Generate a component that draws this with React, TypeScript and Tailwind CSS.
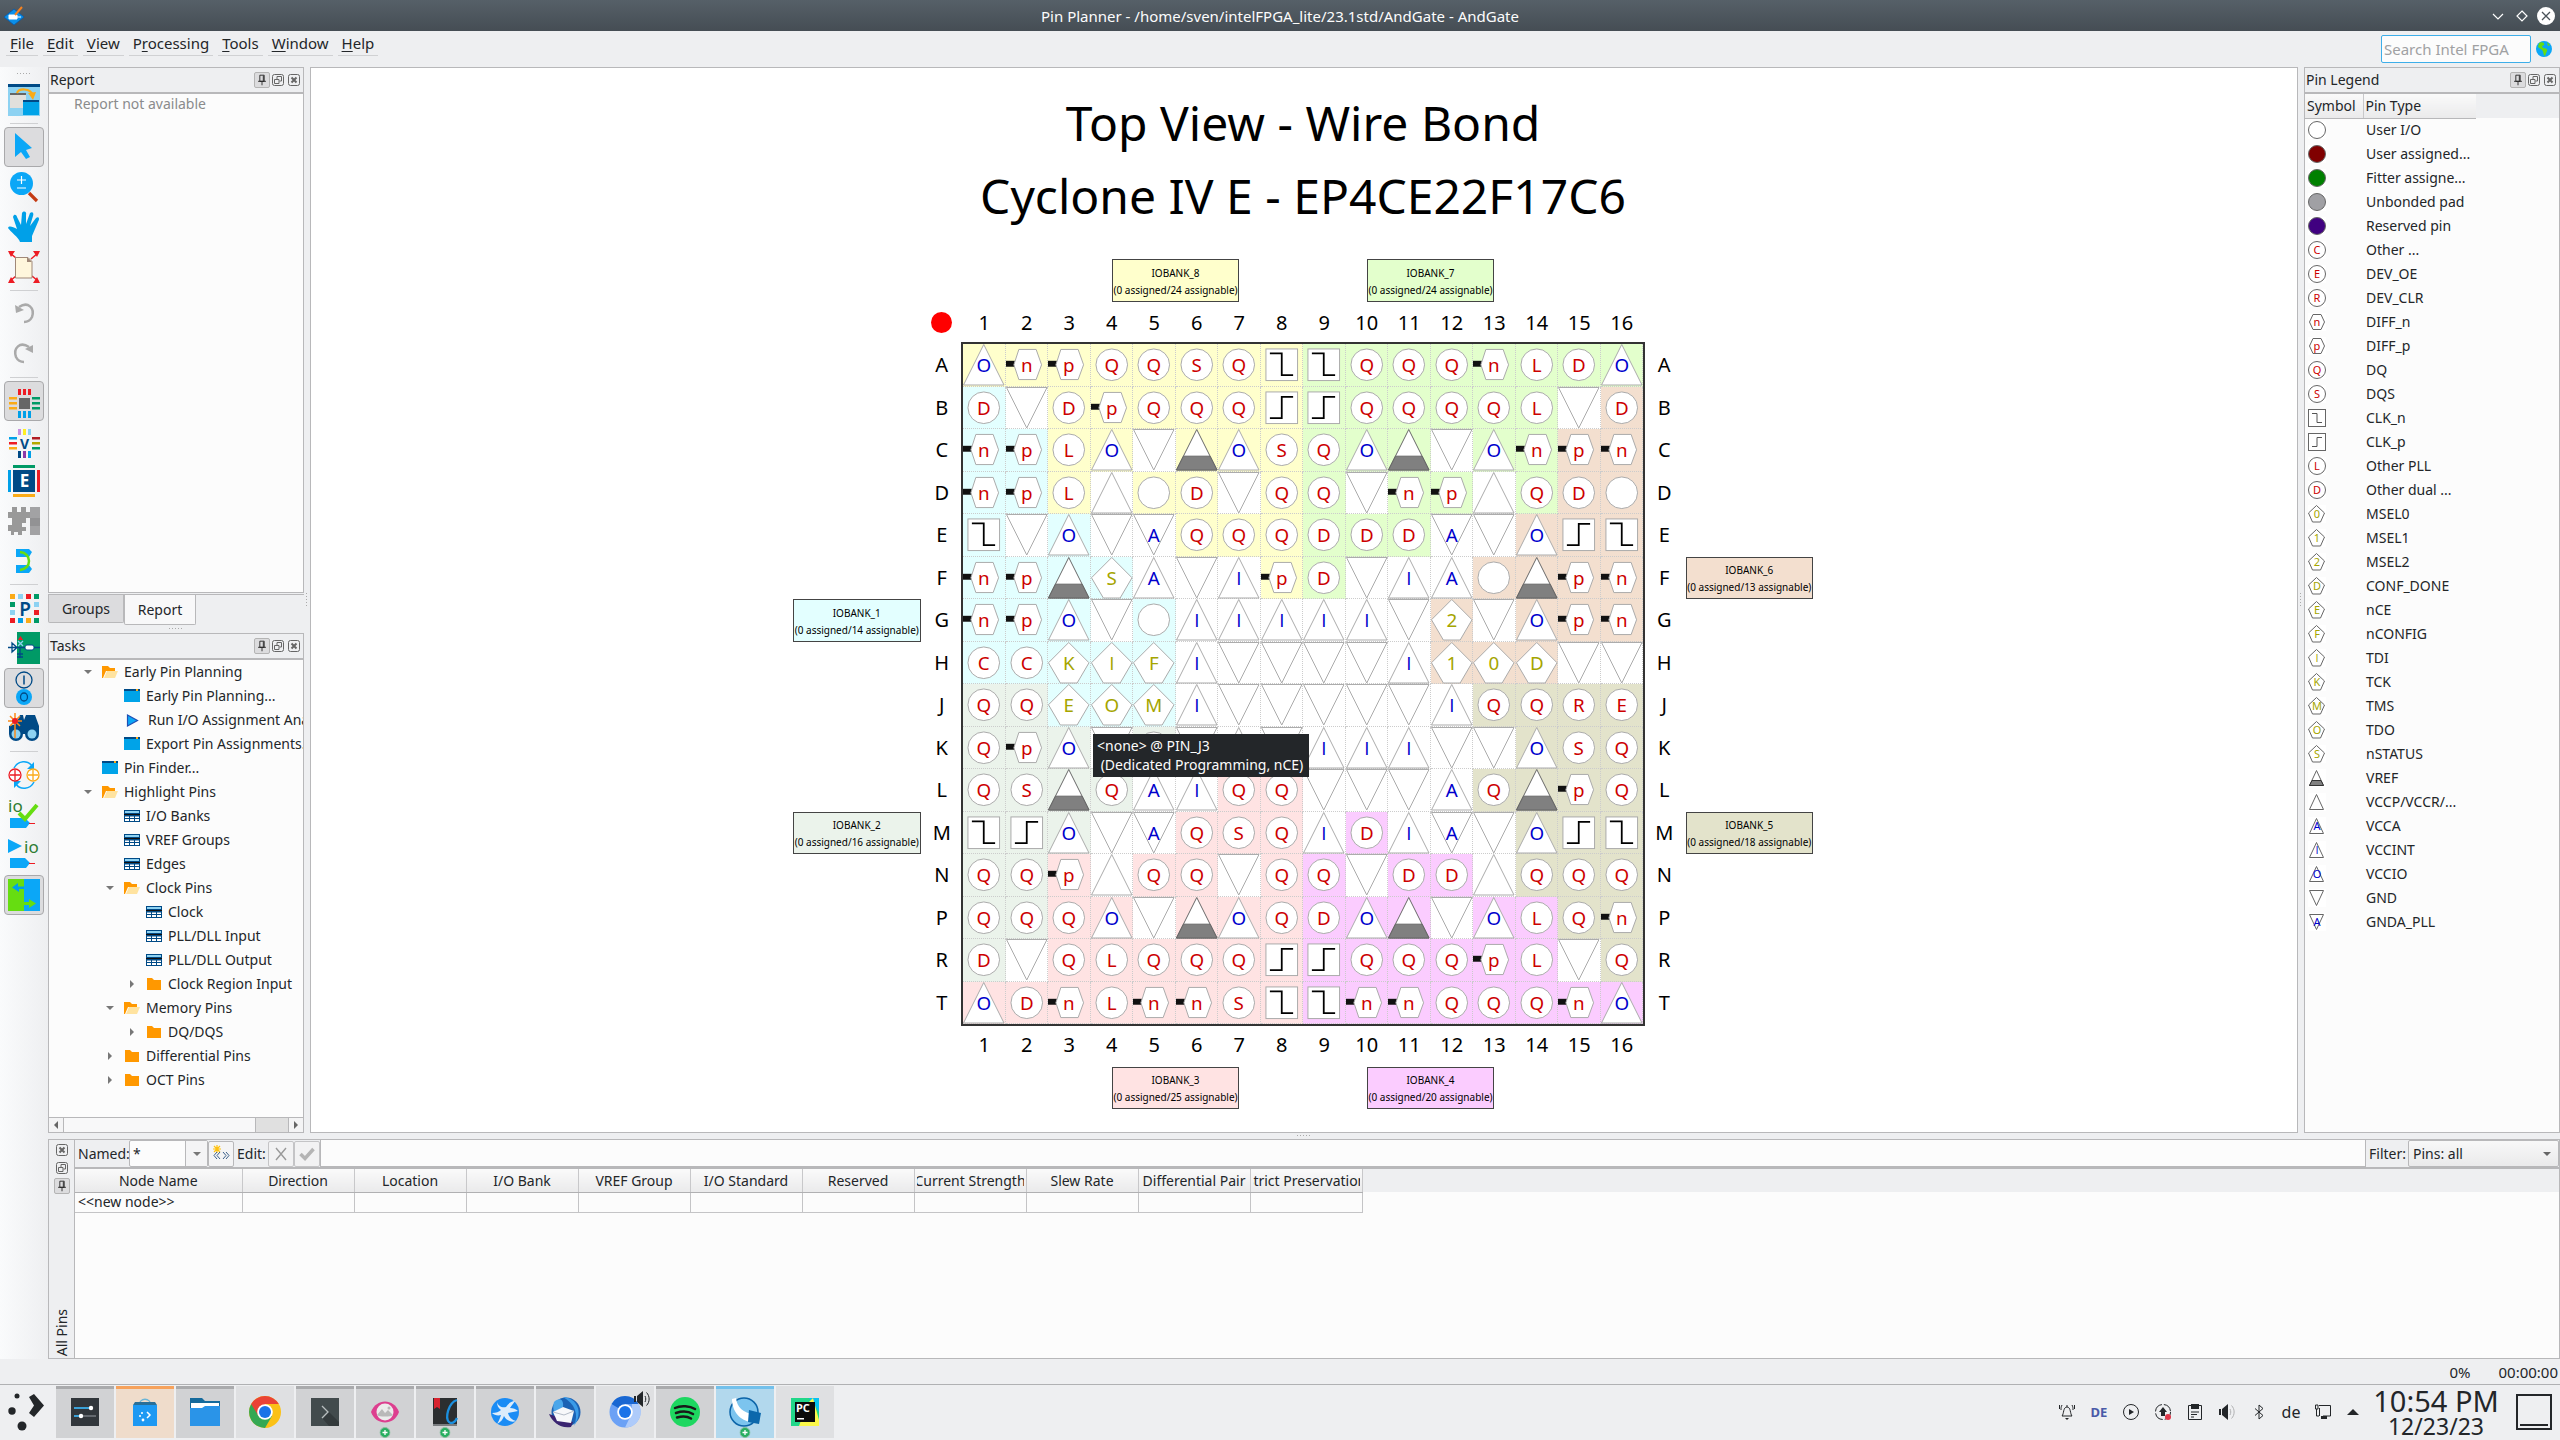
import type { ReactNode } from 'react';

/* ------------------------------------------------------------------ */
/* Pin data                                                            */
/* ------------------------------------------------------------------ */

/* c = circle, h = differential hexagon, t = up triangle, v = down triangle,
   g = pentagon, kn / kp = clock, ref = voltage reference */
const PIN_ROWS: [string, string, string][] = [
  ['A', 'tO hn hp cQ cQ cS cQ kn kn cQ cQ cQ hn cL cD tO', 'yyyyyyyygggggggg'],
  ['B', 'cD v cD hp cQ cQ cQ kp kp cQ cQ cQ cQ cL v cD', 'c-yyyyyygggggg-p'],
  ['C', 'hn hp cL tO v ref tO cS cQ tO ref v tO hn hp hn', 'ccyy-yyyggg-ggpp'],
  ['D', 'hn hp cL t c cD v cQ cQ v hn hp t cQ cD c', 'ccy-yy-yg-gg-gpp'],
  ['E', 'kn v tO v vA cQ cQ cQ cD cD cD vA v tO kp kn', 'c-c--yyyggg--ppp'],
  ['F', 'hn hp ref gS tA v tI hp cD v tI tA c ref hp hn', 'cccc---yg---pppp'],
  ['G', 'hn hp tO v c tI tI tI tI tI v g2 v tO hp hn', 'ccc-c------p-ppp'],
  ['H', 'cC cC gK gI gF tI v v v v tI g1 g0 gD v v', 'ccccc------ppp--'],
  ['J', 'cQ cQ gE gO gM tI v v v v v tI cQ cQ cR cE', 'ssccc-------oooo'],
  ['K', 'cQ hp tO v c v t v tI tI tI v v tO cS cQ', 'sss-s--------ooo'],
  ['L', 'cQ cS ref cQ tA tI cQ cQ v v v tA cQ ref hp cQ', 'ssss--rr----oooo'],
  ['M', 'kn kp tO v vA cQ cS cQ tI cD tI vA v tO kp kn', 'sss--rrr-m---ooo'],
  ['N', 'cQ cQ hp t cQ cQ v cQ cQ v cD cD t cQ cQ cQ', 'ssr-rr-rm-mm-ooo'],
  ['P', 'cQ cQ cQ tO v ref tO cQ cD tO ref v tO cL cQ hn', 'ssrr-rrrmmm-mmoo'],
  ['R', 'cD v cQ cL cQ cQ cQ kp kp cQ cQ cQ hp cL v cQ', 's-rrrrrrmmmmmm-o'],
  ['T', 'tO cD hn cL hn hn cS kn kn hn hn cQ cQ cQ hn tO', 'rrrrrrrrmmmmmmmm'],
];

const BANK_BG: Record<string, string> = {
  y: 'bg-[#ffffcc]',
  g: 'bg-[#e3ffcc]',
  c: 'bg-[#e3ffff]',
  s: 'bg-[#ebf3eb]',
  r: 'bg-[#ffe3e3]',
  m: 'bg-[#fbccff]',
  o: 'bg-[#e3e3cb]',
  p: 'bg-[#f3dfcf]',
  '-': 'bg-white',
};

/* column and row are counted in half cells and cells of the package grid */
const BANKS = [
  { id: 8, count: 24, key: 'y', col: 16, row: 1 },
  { id: 7, count: 24, key: 'g', col: 28, row: 1 },
  { id: 1, count: 14, key: 'c', col: 1, row: 9 },
  { id: 6, count: 13, key: 'p', col: 43, row: 8 },
  { id: 2, count: 16, key: 's', col: 1, row: 14 },
  { id: 5, count: 18, key: 'o', col: 43, row: 14 },
  { id: 3, count: 25, key: 'r', col: 16, row: 20 },
  { id: 4, count: 20, key: 'm', col: 28, row: 20 },
];

const COLS = Array.from({ length: 16 }, (_, i) => i + 1);

const LEGEND: [string, string][] = [
  ['c', 'User I/O'],
  ['c#800000', 'User assigned...'],
  ['c#008000', 'Fitter assigne...'],
  ['c#a0a0a4', 'Unbonded pad'],
  ['c#400080', 'Reserved pin'],
  ['cC', 'Other ...'],
  ['cE', 'DEV_OE'],
  ['cR', 'DEV_CLR'],
  ['hn', 'DIFF_n'],
  ['hp', 'DIFF_p'],
  ['cQ', 'DQ'],
  ['cS', 'DQS'],
  ['kn', 'CLK_n'],
  ['kp', 'CLK_p'],
  ['cL', 'Other PLL'],
  ['cD', 'Other dual ...'],
  ['g0', 'MSEL0'],
  ['g1', 'MSEL1'],
  ['g2', 'MSEL2'],
  ['gD', 'CONF_DONE'],
  ['gE', 'nCE'],
  ['gF', 'nCONFIG'],
  ['gI', 'TDI'],
  ['gK', 'TCK'],
  ['gM', 'TMS'],
  ['gO', 'TDO'],
  ['gS', 'nSTATUS'],
  ['ref', 'VREF'],
  ['t', 'VCCP/VCCR/...'],
  ['tA', 'VCCA'],
  ['tI', 'VCCINT'],
  ['tO', 'VCCIO'],
  ['v', 'GND'],
  ['vA', 'GNDA_PLL'],
];

/* ------------------------------------------------------------------ */
/* Pin symbols                                                         */
/* ------------------------------------------------------------------ */

const INK: Record<string, string> = { c: '#cc0000', h: '#cc0000', t: '#0000cc', v: '#0000cc', g: '#a5a500' };

function ChipPin({ code }: { code: string }) {
  const kind = code === 'ref' ? 'ref' : code[0];
  const letter = kind === 'ref' || kind === 'k' ? '' : code.slice(1);
  const line = { fill: '#fff', stroke: '#aaa', strokeWidth: 1 };
  return (
    <svg viewBox="0 0 42 42" className="block size-full overflow-visible">
      {kind === 'c' && <circle cx="21" cy="21" r="16" {...line} />}
      {kind === 'h' && (
        <>
          <path d="M0 17H9V23H0Z" fill="#111" />
          <path d="M13 5.5H30.500L36 21L30.500 36H13L8 21Z" {...line} />
        </>
      )}
      {kind === 't' && <path d="M21 .5L41.500 41.500H.5Z" {...line} />}
      {kind === 'v' && <path d="M.5 .5H41.500L21 41.500Z" {...line} />}
      {kind === 'g' && <path d="M21 .5L41.500 21L29.500 41.500H12.500L.5 21Z" {...line} />}
      {kind === 'ref' && (
        <>
          <path d="M21 .5L41.500 41.500H.5Z" fill="#fff" stroke="#666" />
          <path d="M7.500 27.500H34.500L41.500 41.500H.5Z" fill="#808080" stroke="#666" />
        </>
      )}
      {kind === 'k' && (
        <>
          <rect x="5" y="5" width="32" height="32" {...line} />
          <path
            d={code === 'kn' ? 'M9 9.500H21V31.500H32.500' : 'M9 31.500H21V10H32.500'}
            fill="none"
            stroke="#000"
            strokeWidth="1.8"
          />
        </>
      )}
      {letter && (
        <text
          x="21"
          y="28"
          textAnchor="middle"
          fontSize="19"
          fill={INK[kind]}
          className={letter === 'I' ? "font-['Open_Sans',sans-serif]" : ''}
        >
          {letter}
        </text>
      )}
    </svg>
  );
}

function LegendPin({ code }: { code: string }) {
  const kind = code === 'ref' ? 'ref' : code[0];
  const rest = kind === 'ref' || kind === 'k' ? '' : code.slice(1);
  const fill = rest.startsWith('#') ? rest : '#fff';
  const letter = rest.startsWith('#') ? '' : rest;
  const line = { fill, stroke: '#666', strokeWidth: 1 };
  return (
    <svg viewBox="0 0 18 18" className="block size-[18px] overflow-visible bg-white">
      {kind === 'c' && <circle cx="9" cy="9" r="8.500" {...line} />}
      {kind === 'h' && <path d="M5 1.500H13L16.500 9L13 16.500H5L1.500 9Z" {...line} />}
      {kind === 't' && <path d="M8.500 1.500L15.500 16.500H1.500Z" {...line} />}
      {kind === 'v' && <path d="M1.500 1.500H15.500L8.500 16.500Z" {...line} />}
      {kind === 'g' && <path d="M8.500 .5L16.500 8L12.500 17H4.500L.5 8Z" {...line} />}
      {kind === 'ref' && (
        <>
          <path d="M8.500 1.500L15.500 16.500H1.500Z" {...line} />
          <path d="M4 11.500H13L15.500 16.500H1.500Z" fill="#808080" stroke="#333" />
        </>
      )}
      {kind === 'k' && (
        <>
          <rect x=".5" y=".5" width="17" height="17" {...line} />
          <path d={code === 'kn' ? 'M4 4.500H9V13.500H14' : 'M4 13.500H9V4.500H14'} fill="none" stroke="#555" />
        </>
      )}
      {letter && (
        <text
          x="9"
          y="13"
          textAnchor="middle"
          fontSize="11"
          fill={INK[kind]}
          className={letter === 'I' ? "font-['Open_Sans',sans-serif]" : ''}
        >
          {letter}
        </text>
      )}
    </svg>
  );
}

/* ------------------------------------------------------------------ */
/* Dock frame pieces                                                   */
/* ------------------------------------------------------------------ */

function PinGlyph() {
  return (
    <svg viewBox="0 0 16 16" className="size-4" fill="none" stroke="#222">
      <path d="M5.500 2.500H10.500V9.500H5.500ZM3.500 9.500H12.500M8 10V14M9.500 3V9" />
    </svg>
  );
}

function RestoreGlyph() {
  return (
    <svg viewBox="0 0 12 12" className="size-3" fill="none" stroke="#666">
      <rect x=".5" y=".5" width="11" height="11" rx="2" />
      <path d="M5 5V2.500H9.500V7H7.500M2.500 5.500H7V9.500H2.500Z" />
    </svg>
  );
}

function CloseGlyph() {
  return (
    <svg viewBox="0 0 12 12" className="size-3" fill="none" stroke="#666">
      <rect x=".5" y=".5" width="11" height="11" rx="2" />
      <path d="M3.500 3.500L8.500 8.500M8.500 3.500L3.500 8.500" strokeWidth="2" />
    </svg>
  );
}

function DockButtons({ vertical = false }: { vertical?: boolean }) {
  const pin = (
    <button
      key="pin"
      aria-label="Pin"
      className="flex size-4 items-center justify-center rounded-xs border border-[#b4b4b4] bg-[#dcdcde]"
    >
      <PinGlyph />
    </button>
  );
  const restore = (
    <button key="restore" aria-label="Detach" className="flex size-4 items-center justify-center">
      <RestoreGlyph />
    </button>
  );
  const close = (
    <button key="close" aria-label="Close" className="flex size-4 items-center justify-center">
      <CloseGlyph />
    </button>
  );
  return vertical ? (
    <div className="flex flex-col items-center gap-0.5 pt-0.5">{[close, restore, pin]}</div>
  ) : (
    <div className="flex items-center">{[pin, restore, close]}</div>
  );
}

function DockHeader({ title }: { title: string }) {
  return (
    <div className="flex h-[26px] shrink-0 items-center justify-between border-b-2 border-[#b8b8ba] px-px pb-px">
      <h2>{title}</h2>
      <DockButtons />
    </div>
  );
}

function GripH() {
  return <div className="h-1 w-4 bg-[radial-gradient(#aaa_35%,transparent_40%)] bg-size-[3px_3px]" />;
}

function GripV() {
  return <div className="h-4 w-1 bg-[radial-gradient(#aaa_35%,transparent_40%)] bg-size-[3px_3px]" />;
}

/* ------------------------------------------------------------------ */
/* Tool bar                                                            */
/* ------------------------------------------------------------------ */

type Tool = { label: string; on?: boolean; icon: ReactNode };

const bars = (c: string[]) => (
  <>
    <path d="M10 4h3v6h-3z" fill={c[0]} />
    <path d="M15 4h3v6h-3z" fill={c[1]} />
    <path d="M20 4h3v6h-3z" fill={c[2]} />
    <path d="M24 12h8v2.500h-8z" fill={c[3]} />
    <path d="M24 17h8v2.500h-8z" fill={c[4]} />
    <path d="M24 22h8v2.500h-8z" fill={c[5]} />
    <path d="M10 26h3v7h-3z" fill={c[6]} />
    <path d="M15 26h3v7h-3z" fill={c[7]} />
    <path d="M20 26h3v7h-3z" fill={c[8]} />
    <path d="M1 12h8v2.500h-8z" fill={c[9]} />
    <path d="M1 17h8v2.500h-8z" fill={c[10]} />
    <path d="M1 22h8v2.500h-8z" fill={c[11]} />
  </>
);

const TOOL_GROUPS: Tool[][] = [
  [
    {
      label: 'Detach window',
      icon: (
        <>
          <rect width="32" height="32" fill="#8dd2f2" />
          <rect width="32" height="3" fill="#004a86" />
          <rect x="2" y="9" width="16" height="15" fill="#e2e0dc" />
          <rect x="2" y="9" width="16" height="2" fill="#666" />
          <rect x="15" y="16" width="16" height="15" fill="#00a3e8" />
          <rect x="15" y="16" width="16" height="2" fill="#004a86" />
          <path d="M9 9C11 4 22 4 25 11" fill="none" stroke="#fbab18" strokeWidth="2.200" />
          <path d="M20 9L28 8L25 16Z" fill="#fbab18" />
        </>
      ),
    },
  ],
  [
    {
      label: 'Selection tool',
      on: true,
      icon: <path d="M7 2V26L13 21L18 28L22 26L18 19L24 17Z" fill="#0ba7f7" />,
    },
    {
      label: 'Zoom tool',
      icon: (
        <>
          <circle cx="13.500" cy="12.500" r="11.500" fill="#0ba7f7" />
          <path d="M13.500 5V13M9 9H18M9 17H18" stroke="#fff" strokeWidth="1.200" />
          <path d="M21 22L29 30" stroke="#c43a12" strokeWidth="3.200" />
        </>
      ),
    },
    {
      label: 'Hand tool',
      icon: (
        <path
          d="M12 31C11 27 2 20 0 17C1 14 5 16 9 18L5 6C6 2 9 4 9 6L13 14L14 2C16-1 19 1 18 4L18 13L22 2C25 0 26 3 25 5L22 15L28 7C31 5 32 8 30 11L24 25L24 31Z"
          fill="#00a0e8"
        />
      ),
    },
    {
      label: 'Fit in window',
      icon: (
        <>
          <path d="M2 2L8 7M30 2L23 8M2 30L8 25M30 30L24 25" stroke="#ed1c24" strokeWidth="1.500" />
          <path d="M0 0H7L3 6ZM32 0H25L29 6ZM0 32H7L3 26ZM32 32H25L29 26Z" fill="#ed1c24" />
          <path d="M7.500 6.500H20L24 10.500V27H7.500Z" fill="#fff6dc" stroke="#a08878" />
          <path d="M19 6L24 11H19Z" fill="#a08878" />
        </>
      ),
    },
  ],
  [
    {
      label: 'Undo',
      icon: (
        <>
          <path d="M11 9C20 3 27 10 24 19C22 23 19 24 16 24" fill="none" stroke="#aaa" strokeWidth="2.500" />
          <path d="M7 7L16 12L8 15Z" fill="#aaa" />
        </>
      ),
    },
    {
      label: 'Redo',
      icon: (
        <>
          <path d="M21 9C12 3 5 10 8 19C10 23 13 24 16 24" fill="none" stroke="#aaa" strokeWidth="2.500" />
          <path d="M25 7L17 11L25 15Z" fill="#aaa" />
        </>
      ),
    },
  ],
  [
    {
      label: 'Show I/O banks',
      on: true,
      icon: (
        <>
          {bars([
            '#ed1c24', '#ed1c24', '#ed1c24', '#009a66', '#009a66', '#009a66',
            '#00a0e8', '#00a0e8', '#00a0e8', '#fbab18', '#fbab18', '#fbab18',
          ])}
          <rect x="11" y="13" width="11" height="11" fill="#666" />
        </>
      ),
    },
    {
      label: 'Show VREF groups',
      icon: (
        <>
          {bars([
            '#c791e0', '#ffee22', '#8dd2f2', '#b01c24', '#b5a800', '#009a66',
            '#004a86', '#8b3aa8', '#00a0e8', '#00a0e8', '#ed1c24', '#fbab18',
          ])}
          <text x="16.500" y="24" textAnchor="middle" fontSize="14" fontWeight="700" fill="#004a86">V</text>
        </>
      ),
    },
    {
      label: 'Show edges',
      icon: (
        <>
          <path d="M5 0h22v3h-22z" fill="#009a66" />
          <path d="M0 5h3v22h-3z" fill="#00a0e8" />
          <path d="M29 5h3v22h-3z" fill="#ed1c24" />
          <path d="M5 29h22v3h-22z" fill="#fbab18" />
          <path d="M5 5h22v22h-22z" fill="#004a86" />
          <text x="16.500" y="22" textAnchor="middle" fontSize="17" fontWeight="700" fill="#fff">E</text>
        </>
      ),
    },
    {
      label: 'Show fitter placements',
      icon: (
        <>
          <path
            d="M0 7H4V2H9V7H13V2H18V7H22V13H18V18H14V22H18V26H14V30H10V27H6V30H3V26H0V20H4V13H0Z"
            fill="#999"
          />
          <rect x="22" y="2" width="10" height="28" fill="#a2a2a4" />
          <rect x="22" y="13" width="10" height="8" fill="#929294" />
        </>
      ),
    },
    {
      label: 'Differential pair connections',
      icon: (
        <>
          <path d="M8 4H21L24 7L21 12H8ZM8 20H21L24 24L21 28H8Z" fill="#0ba7f7" />
          <path d="M12 7C24 8 24 24 12 25" fill="none" stroke="#66dd11" strokeWidth="2.500" />
        </>
      ),
    },
  ],
  [
    {
      label: 'Pin legend',
      icon: (
        <>
          <path d="M2 2h5v5h-5zM18 26h5v5h-5z" fill="#fbab18" />
          <path d="M10 2h5v5h-5zM26 10h5v5h-5zM2 18h5v5h-5z" fill="#8dd2f2" />
          <path d="M18 2h5v5h-5zM26 18h5v5h-5zM2 26h5v5h-5z" fill="#ed1c24" />
          <path d="M26 2h5v5h-5zM2 10h5v5h-5zM26 26h5v5h-5z" fill="#009a66" />
          <path d="M10 26h5v5h-5z" fill="#00a0e8" />
          <text x="17" y="24" textAnchor="middle" fontSize="19" fontWeight="600" fill="#004a86">P</text>
        </>
      ),
    },
    {
      label: 'Board trace model',
      icon: (
        <>
          <rect x="9" width="23" height="32" fill="#009a66" />
          <path d="M0 15.500H17M26 15.500H32M4 11V20L9 15.500ZM12 16V26M9 22H15M9 25H15" fill="none" stroke="#004a86" strokeWidth="1.300" />
          <path d="M10 8L12.500 4L15 8Z" fill="#ed1c24" />
          <path d="M10 9L15 14M15 9L10 14" stroke="#8dd2f2" strokeWidth="1.300" />
          <rect x="17" y="13" width="9" height="5" rx="2" fill="#fff" stroke="#004a86" />
        </>
      ),
    },
    {
      label: 'I/O toggle',
      on: true,
      icon: (
        <>
          <circle cx="16" cy="8" r="8" fill="none" stroke="#004a86" strokeWidth="1.300" />
          <path d="M16 3.500V12.500" stroke="#004a86" strokeWidth="1.500" />
          <circle cx="16" cy="25" r="8" fill="#0ba7f7" />
          <ellipse cx="16" cy="25" rx="3.500" ry="4" fill="none" stroke="#004a86" strokeWidth="1.300" />
        </>
      ),
    },
    {
      label: 'Pin finder',
      icon: (
        <>
          <path d="M8 12L12 3H15L16 8L18 3H27L31 14V22H1V14Z" fill="#004a86" />
          <circle cx="8" cy="22" r="7" fill="#004a86" />
          <circle cx="24" cy="22" r="7" fill="#004a86" />
          <circle cx="8" cy="22" r="4.500" fill="#8dd2f2" />
          <circle cx="24" cy="22" r="4.500" fill="#8dd2f2" />
          <path d="M7 1V26M0 9H14M2 4L12 14M12 4L2 14" stroke="#fb8b18" strokeWidth="1.500" />
          <circle cx="7" cy="9" r="3" fill="#ed1c24" />
        </>
      ),
    },
  ],
  [
    {
      label: 'Swap pins',
      icon: (
        <>
          <path d="M6 9C10 1 20 1 24 7M26 23C22 31 12 31 8 25" fill="none" stroke="#0ba7f7" strokeWidth="1.500" />
          <path d="M26 3V10H19ZM6 29V22H13Z" fill="#0ba7f7" />
          <circle cx="7" cy="16" r="6" fill="#fff" stroke="#ed1c24" strokeWidth="1.300" />
          <path d="M7 11V21M2 16H12" stroke="#ed1c24" strokeWidth="1.300" />
          <circle cx="25" cy="16" r="6" fill="#fff" stroke="#fbab18" strokeWidth="1.300" />
          <path d="M25 11V21M20 16H30" stroke="#fbab18" strokeWidth="1.300" />
        </>
      ),
    },
    {
      label: 'Enable live I/O check',
      icon: (
        <>
          <text x="0" y="13" fontSize="17" fill="#2e7d32">io</text>
          <path d="M2 19H17L22 24L18 29H2Z" fill="#0ba7f7" />
          <path d="M21 24.500H27" stroke="#ed1c24" />
          <path d="M11 14L17 20L29 6" fill="none" stroke="#66dd11" strokeWidth="4" />
        </>
      ),
    },
    {
      label: 'Start I/O assignment analysis',
      icon: (
        <>
          <path d="M0 0V14L14 7Z" fill="#0ba7f7" />
          <text x="16" y="14" fontSize="17" fill="#2e7d32">io</text>
          <path d="M2 19H17L22 24L18 29H2Z" fill="#0ba7f7" />
          <path d="M21 24.500H27" stroke="#ed1c24" />
        </>
      ),
    },
    {
      label: 'Sync node assignments',
      on: true,
      icon: (
        <>
          <rect width="16" height="32" fill="#66dd11" />
          <rect x="16" width="16" height="32" fill="#0ba7f7" />
          <path d="M16 7.500H10V4L4 8.500L11 13V10H16Z" fill="#00a0e8" />
          <path d="M16 23H21V20L28 24.500L21 29V26H16Z" fill="#66dd11" />
        </>
      ),
    },
  ],
];

function ToolBar() {
  return (
    <nav
      aria-label="Tools"
      className="flex w-12 shrink-0 flex-col items-center bg-gradient-to-r from-[#fafbfc] to-[#eeeff1]"
    >
      <div className="flex h-[13px] items-center">
        <GripH />
      </div>
      {TOOL_GROUPS.map((group, i) => (
        <div key={i} className="flex flex-col items-center">
          {i > 0 && (
            <div className="flex h-[7px] w-7 items-center">
              <div className="h-px w-full bg-[#cfd0d2]" />
            </div>
          )}
          {group.map((t) => (
            <button
              key={t.label}
              aria-label={t.label}
              className={
                t.on
                  ? 'flex size-10 items-center justify-center rounded-sm border border-[#a9a9ab] bg-[#dcdcde]'
                  : 'flex size-10 items-center justify-center'
              }
            >
              <svg viewBox="0 0 32 32" className="size-8 overflow-visible">
                {t.icon}
              </svg>
            </button>
          ))}
        </div>
      ))}
    </nav>
  );
}

/* ------------------------------------------------------------------ */
/* Report and tasks                                                    */
/* ------------------------------------------------------------------ */

type TaskIcon = 'open' | 'folder' | 'window' | 'play' | 'table';

const TASKS: { depth: number; arrow?: 'down' | 'right'; icon: TaskIcon; text: string }[] = [
  { depth: 0, arrow: 'down', icon: 'open', text: 'Early Pin Planning' },
  { depth: 1, icon: 'window', text: 'Early Pin Planning...' },
  { depth: 1, icon: 'play', text: 'Run I/O Assignment Analysis' },
  { depth: 1, icon: 'window', text: 'Export Pin Assignments...' },
  { depth: 0, icon: 'window', text: 'Pin Finder...' },
  { depth: 0, arrow: 'down', icon: 'open', text: 'Highlight Pins' },
  { depth: 1, icon: 'table', text: 'I/O Banks' },
  { depth: 1, icon: 'table', text: 'VREF Groups' },
  { depth: 1, icon: 'table', text: 'Edges' },
  { depth: 1, arrow: 'down', icon: 'open', text: 'Clock Pins' },
  { depth: 2, icon: 'table', text: 'Clock' },
  { depth: 2, icon: 'table', text: 'PLL/DLL Input' },
  { depth: 2, icon: 'table', text: 'PLL/DLL Output' },
  { depth: 2, arrow: 'right', icon: 'folder', text: 'Clock Region Input' },
  { depth: 1, arrow: 'down', icon: 'open', text: 'Memory Pins' },
  { depth: 2, arrow: 'right', icon: 'folder', text: 'DQ/DQS' },
  { depth: 1, arrow: 'right', icon: 'folder', text: 'Differential Pins' },
  { depth: 1, arrow: 'right', icon: 'folder', text: 'OCT Pins' },
];

const INDENT = ['pl-[29px]', 'pl-[51px]', 'pl-[73px]'];

function TaskGlyph({ icon }: { icon: TaskIcon }) {
  return (
    <svg viewBox="0 0 16 16" className="size-4 shrink-0">
      {icon === 'open' && (
        <>
          <path d="M0 2H6L8 4H13V7H4L1 14H0Z" fill="#ff9800" />
          <path d="M5 7H16L13 14H2Z" fill="#ffe3a0" />
        </>
      )}
      {icon === 'folder' && <path d="M1 2H6L8 4H15V14H1Z" fill="#ff9800" />}
      {icon === 'window' && (
        <>
          <rect y="1" width="16" height="13" fill="#00a3e8" />
          <rect y="1" width="16" height="2" fill="#004a86" />
          <rect x="12" y="1" width="2" height="2" fill="#fbab18" />
        </>
      )}
      {icon === 'play' && <path d="M3.500 3V14L13.500 8.500Z" fill="#0ba7f7" stroke="#1f4fb4" strokeWidth="1.200" />}
      {icon === 'table' && (
        <>
          <rect y="2" width="16" height="12" fill="#004a86" />
          <rect x="1" y="3" width="14" height="2" fill="#8dd2f2" />
          <path d="M1 8.500H5V10H1ZM6 8.500H10V10H6ZM11 8.500H15V10H11ZM1 11H5V13H1ZM6 11H10V13H6ZM11 11H15V13H11Z" fill="#fff" />
          <rect y="6" width="16" height="1" fill="#111" />
        </>
      )}
    </svg>
  );
}

function LeftDocks() {
  return (
    <div className="flex w-[256px] shrink-0 flex-col">
      <section className="flex min-h-0 flex-1 flex-col border border-[#b8b8ba]">
        <DockHeader title="Report" />
        <div className="min-h-0 flex-1 bg-[#fcfcfc] pl-[25px] leading-5 text-[#8a8b8c]">Report not available</div>
      </section>
      <div className="mt-px flex shrink-0 items-start border-t border-[#b8b8ba]" role="tablist">
        <button
          role="tab"
          aria-selected="false"
          className="h-7 w-[76px] rounded-b-xs border border-t-0 border-[#b8b8ba] bg-[#dcdcde]"
        >
          Groups
        </button>
        <button
          role="tab"
          aria-selected="true"
          className="h-[30px] w-[72px] rounded-b-xs border border-t-0 border-[#b8b8ba] bg-[#f8f8f9]"
        >
          Report
        </button>
      </div>
      <div className="flex h-2 shrink-0 items-center justify-center">
        <GripH />
      </div>
      <section className="flex h-[500px] shrink-0 flex-col border border-[#b8b8ba]">
        <DockHeader title="Tasks" />
        <ul className="min-h-0 flex-1 overflow-hidden bg-[#fcfcfc]">
          {TASKS.map((t) => (
            <li key={t.text} className={'flex h-6 items-center whitespace-nowrap ' + INDENT[t.depth]}>
              <span className="mr-1 flex w-5 shrink-0 justify-center">
                {t.arrow && (
                  <svg viewBox="0 0 8 8" className="size-2" fill="#777">
                    <path d={t.arrow === 'down' ? 'M0 2H8L4 6Z' : 'M2 0L6 4L2 8Z'} />
                  </svg>
                )}
              </span>
              <TaskGlyph icon={t.icon} />
              <span className={t.icon === 'play' ? 'ml-2' : 'ml-1.5'}>{t.text}</span>
            </li>
          ))}
        </ul>
        <div className="flex h-[15px] shrink-0 border-t border-[#b8b8ba] bg-[#e0e0e0]">
          <button aria-label="Scroll left" className="flex w-[15px] items-center justify-center border-r border-[#b8b8ba] bg-[#f4f4f5]">
            <svg viewBox="0 0 8 8" className="size-2" fill="#666">
              <path d="M6 0L2 4L6 8Z" />
            </svg>
          </button>
          <div className="w-[192px] border-r border-[#b8b8ba] bg-[#f8f8f9]" />
          <div className="flex-1" />
          <button aria-label="Scroll right" className="flex w-[15px] items-center justify-center border-l border-[#b8b8ba] bg-[#f4f4f5]">
            <svg viewBox="0 0 8 8" className="size-2" fill="#666">
              <path d="M2 0L6 4L2 8Z" />
            </svg>
          </button>
        </div>
      </section>
    </div>
  );
}

/* ------------------------------------------------------------------ */
/* Package view                                                        */
/* ------------------------------------------------------------------ */

function Label({ col, row, children }: { col: number; row: number; children: ReactNode }) {
  return (
    <div
      className="flex items-center justify-center text-[20px] leading-6"
      style={{ gridColumn: `${col} / span 2`, gridRow: row }}
    >
      {children}
    </div>
  );
}

function PackageView() {
  return (
    <main className="flex min-w-0 flex-1 flex-col items-center overflow-hidden border border-[#b8b8ba] bg-white pr-0.5 pt-[18px] text-black">
      <h1 className="text-center text-[48px] leading-[73px]">
        Top View - Wire Bond
        <br />
        Cyclone IV E - EP4CE22F17C6
      </h1>
      <div className="relative mt-[27px] grid h-[850px] w-[1020px] shrink-0 grid-cols-[repeat(48,minmax(0,1fr))] grid-rows-[repeat(20,minmax(0,1fr))]">
        {BANKS.map((b) => (
          <div
            key={b.id}
            className={
              'flex flex-col items-center justify-center whitespace-nowrap border border-[#444] pt-[3px] text-[10px] leading-[17px] ' +
              BANK_BG[b.key]
            }
            style={{ gridColumn: `${b.col} / span 6`, gridRow: b.row }}
          >
            <span>IOBANK_{b.id}</span>
            <span>(0 assigned/{b.count} assignable)</span>
          </div>
        ))}
        <div className="flex items-center justify-center" style={{ gridColumn: '7 / span 2', gridRow: 2 }}>
          <div className="size-[21px] rounded-full bg-[#ff0000]" />
        </div>
        {COLS.map((c) => (
          <Label key={'t' + c} col={7 + c * 2} row={2}>
            {c}
          </Label>
        ))}
        {COLS.map((c) => (
          <Label key={'b' + c} col={7 + c * 2} row={19}>
            {c}
          </Label>
        ))}
        {PIN_ROWS.map(([name], i) => (
          <Label key={'l' + name} col={7} row={i + 3}>
            {name}
          </Label>
        ))}
        {PIN_ROWS.map(([name], i) => (
          <Label key={'r' + name} col={41} row={i + 3}>
            {name}
          </Label>
        ))}
        <div
          className="grid grid-cols-[repeat(16,minmax(0,1fr))] grid-rows-[repeat(16,minmax(0,1fr))] outline-2 outline-[#333]"
          style={{ gridColumn: '9 / span 32', gridRow: '3 / span 16' }}
        >
          {PIN_ROWS.map(([name, pins, banks]) =>
            pins.split(' ').map((code, i) => (
              <div
                key={name + i}
                className={'min-h-0 min-w-0 border-b border-r border-dotted border-[#ccc] ' + BANK_BG[banks[i]]}
              >
                <ChipPin code={code} />
              </div>
            )),
          )}
        </div>
        <div
          role="tooltip"
          className="absolute left-[300px] top-[475px] h-[43px] w-[216px] whitespace-nowrap bg-[#232629] pl-1 pt-0.5 leading-[19px] text-[#fcfcfc]"
        >
          &lt;none&gt; @ PIN_J3
          <br />
          &nbsp;(Dedicated Programming, nCE)
        </div>
      </div>
    </main>
  );
}

function PinLegend() {
  return (
    <aside className="flex w-[256px] shrink-0 flex-col border border-[#b8b8ba]">
      <DockHeader title="Pin Legend" />
      <div className="min-h-0 flex-1 overflow-hidden bg-[#fcfcfc]">
        <table className="w-full table-fixed border-collapse">
          <thead>
            <tr className="h-6 bg-[#eeeff1] text-left">
              <th className="w-[58px] border-b border-r border-b-[#b8b8ba] border-r-[#c8c8ca] bg-gradient-to-b from-[#fafafa] to-[#eaeaeb] pl-0.5 font-normal">
                Symbol
              </th>
              <th className="w-[113px] border-b border-[#b8b8ba] bg-gradient-to-b from-[#fafafa] to-[#eaeaeb] pl-0.5 font-normal">
                Pin Type
              </th>
              <th />
            </tr>
          </thead>
          <tbody>
            {LEGEND.map(([code, text]) => (
              <tr key={text} className="h-6">
                <td className="pl-[3px]">
                  <LegendPin code={code} />
                </td>
                <td className="whitespace-nowrap pl-[3px]">{text}</td>
                <td />
              </tr>
            ))}
          </tbody>
        </table>
      </div>
    </aside>
  );
}

/* ------------------------------------------------------------------ */
/* All pins                                                            */
/* ------------------------------------------------------------------ */

const COLUMNS = [
  'Direction',
  'Location',
  'I/O Bank',
  'VREF Group',
  'I/O Standard',
  'Reserved',
  'Current Strength',
  'Slew Rate',
  'Differential Pair',
  'Strict Preservation',
];

function AllPins() {
  return (
    <section className="flex h-[220px] shrink-0 border border-[#b8b8ba]">
      <div className="flex w-[26px] shrink-0 flex-col items-center justify-between border-r border-[#b8b8ba] pb-0.5">
        <DockButtons vertical />
        <h2 className="rotate-180 [writing-mode:vertical-rl]">All Pins</h2>
      </div>
      <div className="flex min-w-0 flex-1 flex-col">
        <div className="flex h-[27px] shrink-0 items-center">
          <label htmlFor="named" className="w-[54px] pl-[3px]">
            Named:
          </label>
          <div className="flex h-[27px] w-[79px] shrink-0 rounded-xs border border-[#b8b8ba] bg-[#fcfcfc]">
            <input id="named" defaultValue="*" className="min-w-0 flex-1 bg-transparent pl-[3px] outline-none" />
            <button aria-label="Named history" className="flex w-[22px] items-center justify-center border-l border-[#b8b8ba] bg-[#f4f4f5]">
              <svg viewBox="0 0 8 8" className="size-2" fill="#777">
                <path d="M0 2H8L4 6Z" />
              </svg>
            </button>
          </div>
          <button aria-label="Node finder" className="flex h-[26px] w-[26px] shrink-0 items-center justify-center rounded-xs border border-[#b8b8ba] bg-[#f4f4f5]">
            <svg viewBox="0 0 18 18" className="size-[18px]" fill="none">
              <path d="M5 0V8M1 4H9M2 1L8 7M8 1L2 7" stroke="#ffc20e" strokeWidth="1.200" />
              <path d="M5 7L2 10.500L5 14M8 7L5 10.500L8 14M11 7L14 10.500L11 14M14 7L17 10.500L14 14" stroke="#3a5f8a" />
            </svg>
          </button>
          <label htmlFor="edit" className="w-[34px] pl-[3px]">
            Edit:
          </label>
          <button aria-label="Cancel edit" className="flex h-[26px] w-[26px] shrink-0 items-center justify-center rounded-xs border border-[#c4c4c6] bg-[#f2f2f3]">
            <svg viewBox="0 0 14 14" className="size-3.5" stroke="#999" strokeWidth="1.400">
              <path d="M2 1L12 13M12 1L2 13" />
            </svg>
          </button>
          <button aria-label="Accept edit" className="flex h-[26px] w-[26px] shrink-0 items-center justify-center rounded-xs border border-[#c4c4c6] bg-[#f2f2f3]">
            <svg viewBox="0 0 16 16" className="size-4" fill="none" stroke="#b4b4b4" strokeWidth="3.500">
              <path d="M1.500 8L6 12.500L14.500 3" />
            </svg>
          </button>
          <input id="edit" className="h-[27px] min-w-0 flex-1 border border-t-0 border-[#b8b8ba] bg-[#fcfcfc] px-1 outline-none" />
          <label htmlFor="filter" className="w-[42px] pl-[3px]">
            Filter:
          </label>
          <div className="relative h-[27px] w-[151px] shrink-0">
            <select
              id="filter"
              className="h-full w-full appearance-none rounded-xs border border-[#b8b8ba] bg-gradient-to-b from-[#f8f8f8] to-[#eaeaeb] pl-1"
            >
              <option>Pins: all</option>
            </select>
            <svg viewBox="0 0 8 8" className="pointer-events-none absolute right-2 top-2.5 size-2" fill="#666">
              <path d="M0 2H8L4 6Z" />
            </svg>
          </div>
        </div>
        <div className="min-h-0 flex-1 overflow-hidden border-t-2 border-[#b8b8ba] bg-[#fcfcfc]">
          <table className="w-full table-fixed border-collapse">
            <thead>
              <tr className="h-[23px] bg-[#eeeff1] leading-[19px]">
                <th className="w-[167px] border-b border-r border-b-[#b0b0b2] border-r-[#c8c8ca] bg-gradient-to-b from-[#fafafa] to-[#eaeaeb] font-normal">
                  Node Name
                </th>
                {COLUMNS.map((c) => (
                  <th
                    key={c}
                    className="w-28 border-b border-r border-b-[#b0b0b2] border-r-[#c8c8ca] bg-gradient-to-b from-[#fafafa] to-[#eaeaeb] px-0.5 font-normal"
                  >
                    <div className="flex justify-center overflow-hidden whitespace-nowrap">
                      <span>{c}</span>
                    </div>
                  </th>
                ))}
                <th />
              </tr>
            </thead>
            <tbody>
              <tr className="h-5 leading-[18px]">
                <td className="border-b border-r border-[#c4c4c6] pl-[3px]">&lt;&lt;new node&gt;&gt;</td>
                {COLUMNS.map((c) => (
                  <td key={c} className="border-b border-r border-[#c4c4c6]" />
                ))}
                <td />
              </tr>
            </tbody>
          </table>
        </div>
      </div>
    </section>
  );
}

/* ------------------------------------------------------------------ */
/* Desktop panel                                                       */
/* ------------------------------------------------------------------ */

type App = { name: string; look?: 'open' | 'idle' | 'alert' | 'active'; plus?: boolean; loud?: boolean; icon: ReactNode };

const APPS: App[] = [
  {
    name: 'System Settings',
    icon: (
      <>
        <rect x="2" y="2" width="28" height="28" fill="#31363b" />
        <path d="M5 12H22" stroke="#3daee9" strokeWidth="1.800" />
        <path d="M10 20H27" stroke="#6a7075" strokeWidth="1.800" />
        <path d="M5 20H12" stroke="#3daee9" strokeWidth="1.800" />
        <circle cx="22" cy="12" r="2.200" fill="#fff" />
        <circle cx="12" cy="20" r="2.200" fill="#fff" />
      </>
    ),
  },
  {
    name: 'Discover',
    look: 'alert',
    icon: (
      <>
        <path d="M10 10C10 1 22 1 22 10" fill="none" stroke="#6bb5d8" strokeWidth="1.500" />
        <path d="M6 6H26L28 9H4Z" fill="#2a6f98" />
        <rect x="4" y="9" width="24" height="21" fill="#1d99f3" />
        <circle cx="13" cy="17" r="1" fill="#fff" />
        <circle cx="11" cy="20" r="1" fill="#fff" />
        <circle cx="14" cy="24" r="1.400" fill="#fff" />
        <path d="M18 16L21 19L18 22" fill="none" stroke="#fff" strokeWidth="1.500" />
      </>
    ),
  },
  {
    name: 'Dolphin',
    icon: (
      <>
        <path d="M1 2H13L16 5H31V14H1Z" fill="#156a9c" />
        <path d="M2 7H30V14H2Z" fill="#fff" />
        <path d="M1 12H13L16 10H31V30H1Z" fill="#2a94e8" />
      </>
    ),
  },
  {
    name: 'Chrome',
    look: 'idle',
    icon: (
      <>
        <circle cx="16" cy="16" r="16" fill="#fbc116" />
        <path d="M16 16L2.200 8A16 16 0 0 1 29.800 8H16Z" fill="#ea4335" />
        <path d="M2.200 8A16 16 0 0 0 16 32L23 20L16 16Z" fill="#34a853" />
        <path d="M2.200 8L9.500 20L16 10H16V8Z" fill="#ea4335" />
        <circle cx="16" cy="16" r="7.800" fill="#fff" />
        <circle cx="16" cy="16" r="6" fill="#1a73e8" />
      </>
    ),
  },
  {
    name: 'Konsole',
    icon: (
      <>
        <rect x="2" y="2" width="28" height="28" fill="#424b4d" />
        <path d="M14 23L20 16L30 26V30H20Z" fill="#333a3c" />
        <path d="M13 10L19 16L13 22" fill="none" stroke="#b8bebf" strokeWidth="1.300" />
      </>
    ),
  },
  {
    name: 'Gwenview',
    plus: true,
    icon: (
      <>
        <path d="M2 16C7 2 25 2 30 16C25 30 7 30 2 16Z" fill="#dd3f8f" />
        <circle cx="16" cy="16" r="8.500" fill="#ececec" />
        <path d="M8 19L13 13L16 17L19 14L24 19C22 21 10 21 8 19Z" fill="#b9b9b9" />
        <circle cx="20" cy="12" r="1.500" fill="#b9b9b9" />
      </>
    ),
  },
  {
    name: 'Book Reader',
    plus: true,
    icon: (
      <>
        <rect x="4" y="2" width="24" height="28" fill="#2b2e30" />
        <rect x="4" y="28" width="24" height="2" fill="#7a7d80" />
        <path d="M5 2H11V13L8 11L5 13Z" fill="#d8232f" />
        <path d="M28 4C19 7 16 22 20 26C22 28 26 27 28 22" fill="none" stroke="#1b90e0" strokeWidth="2.300" />
      </>
    ),
  },
  {
    name: 'Falkon',
    icon: (
      <>
        <circle cx="16" cy="16" r="14" fill="#1a8cf5" />
        <path
          d="M8 6C9 10 13 12 17 11C19 8 22 5 26 5C24 8 23 9 21 12C24 12 27 13 29 15C26 16 22 16 19 17C20 21 23 24 27 25C22 27 17 24 15 20C14 23 12 26 8 28C10 25 11 22 12 19C9 20 5 19 3 17C7 17 10 16 12 14C9 12 8 9 8 6Z"
          fill="#dcecfb"
        />
      </>
    ),
  },
  {
    name: 'Thunderbird',
    icon: (
      <>
        <circle cx="17" cy="16" r="14.500" fill="#1c62b4" />
        <path d="M14 1C28 2 35 16 25 30C30 18 26 8 14 1Z" fill="#3a9be8" />
        <path d="M5 6C10 1 15 3 14 11L5 16C4 12 4 9 5 6Z" fill="#4aa6ea" />
        <path d="M0 18C3 26 12 33 22 31L24 26L6 20Z" fill="#3a2470" />
        <path d="M4 16L14 11L25 15L22 27L8 25Z" fill="#f7f8fa" />
        <path d="M4 16L15 19L25 15" fill="none" stroke="#b4bcc8" />
      </>
    ),
  },
  {
    name: 'Chromium',
    look: 'idle',
    loud: true,
    icon: (
      <>
        <circle cx="16" cy="16" r="15.500" fill="#6ba1f5" />
        <path d="M16 16L2.500 8A15.500 15.500 0 0 1 29.500 8H16Z" fill="#1967d2" />
        <path d="M29.500 8A15.500 15.500 0 0 1 16 31.500L22 19L23 8Z" fill="#aecbfa" />
        <circle cx="16" cy="16" r="7.800" fill="#fff" />
        <circle cx="16" cy="16" r="6" fill="#1a73e8" />
      </>
    ),
  },
  {
    name: 'Spotify',
    icon: (
      <>
        <circle cx="16" cy="16" r="15" fill="#1ed760" />
        <path d="M6 12C12 9 21 10 26 13M7 17C13 15 19 15 24 18M8 21.500C13 20 18 20 22 22.500" fill="none" stroke="#191919" strokeWidth="2.500" strokeLinecap="round" />
      </>
    ),
  },
  {
    name: 'Pin Planner',
    look: 'active',
    plus: true,
    icon: (
      <>
        <circle cx="15" cy="16" r="14" fill="#7cc4ee" stroke="#0c64a8" strokeWidth="1.500" />
        <path d="M3 3C3 16 12 25 22 26L24 18C14 17 8 11 7 2Z" fill="#fff" />
        <path d="M20 14L32 17L30 28L19 26Z" fill="#0c68ac" />
      </>
    ),
  },
  {
    name: 'PyCharm',
    look: 'idle',
    icon: (
      <>
        <rect x="2" y="2" width="28" height="28" fill="#21d789" />
        <path d="M20 2H30V16Z" fill="#07c3f2" />
        <path d="M18 8L24 2L30 24V30H10Z" fill="#fcf84a" />
        <rect x="6" y="6" width="20" height="20" fill="#0b0b0b" />
        <text x="7" y="16" fontSize="11" fontWeight="700" fill="#fff">PC</text>
        <rect x="8" y="22" width="7" height="1.500" fill="#fff" />
      </>
    ),
  },
];

const APP_LOOK = {
  open: 'border-[#a9aaac] bg-[#d1d2d4]',
  idle: 'border-[#dfe0e2] bg-[#dfe0e2]',
  alert: 'border-[#f6a25c] bg-[#efdccb]',
  active: 'border-[#72c0eb] bg-[#b2d8ed]',
};

function TrayIcon({ label, children }: { label: string; children: ReactNode }) {
  return (
    <button aria-label={label} className="flex w-8 items-center justify-center">
      <svg viewBox="0 0 16 16" className="size-4 overflow-visible" fill="none" stroke="#232629">
        {children}
      </svg>
    </button>
  );
}

function Taskbar() {
  return (
    <footer className="flex h-14 shrink-0 items-stretch border-t border-[#b0b1b3] bg-[#eeeff1] text-[#232629]">
      <button aria-label="Application launcher" className="flex w-14 items-center justify-center pb-0.5 pr-1">
        <svg viewBox="0 0 38 38" className="size-[38px]" fill="#232629">
          <circle cx="10" cy="3" r="2.500" />
          <circle cx="5" cy="18" r="3.700" />
          <circle cx="15" cy="33" r="4.500" />
          <path d="M22 4L27 1L37 12.500L27 24L22 20L27 12.500Z" />
        </svg>
      </button>
      <div className="flex gap-0.5 pb-0.5 pt-px">
        {APPS.map((a) => (
          <button
            key={a.name}
            aria-label={a.name}
            className={'relative flex w-[58px] items-center justify-center border-t-3 pb-1 ' + APP_LOOK[a.look ?? 'open']}
          >
            <svg viewBox="0 0 32 32" className="size-8 overflow-visible">
              {a.icon}
            </svg>
            {a.plus && (
              <svg viewBox="0 0 11 11" className="absolute bottom-0 left-1/2 size-[11px] -translate-x-1/2">
                <circle cx="5.500" cy="5.500" r="5" fill="#27ae60" stroke="#8bbf9f" />
                <path d="M5.500 3V8M3 5.500H8" stroke="#fff" strokeWidth="1.300" />
              </svg>
            )}
            {a.loud && (
              <svg viewBox="0 0 16 16" className="absolute right-1 top-0.5 size-4" fill="none" stroke="#232629">
                <path d="M0 5H2V11H0ZM3 5L9 0V16L3 11Z" fill="#232629" stroke="none" />
                <path d="M11 5C12 7 12 9 11 11M12.500 1.500C16 5 16 11 12.500 14.500" />
              </svg>
            )}
          </button>
        ))}
      </div>
      <div className="ml-auto flex items-stretch pb-px pr-2">
        <TrayIcon label="Notifications">
          <path d="M3 12C5 10 4 3 8 3C12 3 11 10 13 12ZM8 1V3M3 1C2 3 2 4 2 6M13 1C14 3 14 4 14 6M.5 1V5M15.500 1V5" />
          <path d="M6 14H10L8 16Z" fill="#232629" stroke="none" />
        </TrayIcon>
        <button className="flex w-8 items-center justify-center text-[13px] font-bold text-[#4a5aa8]">DE</button>
        <TrayIcon label="Media player">
          <circle cx="8" cy="8" r="7.500" />
          <path d="M6 5V11L11 8Z" fill="#232629" stroke="none" />
        </TrayIcon>
        <TrayIcon label="Updates">
          <circle cx="8" cy="8" r="7.500" strokeDasharray="10 2" />
          <path d="M8 3L12 8H10V12H6V8H4Z" fill="#232629" stroke="none" />
          <circle cx="13" cy="13" r="3" fill="#e0384a" stroke="none" />
        </TrayIcon>
        <TrayIcon label="Clipboard">
          <path d="M1.500 1.500H14.500V15.500H1.500ZM4 8H12M4 10.500H10M4 13H7" />
          <path d="M4 0H12V5H4Z" fill="#232629" stroke="none" />
        </TrayIcon>
        <TrayIcon label="Volume">
          <path d="M0 5H2V11H0ZM3 5L9 0V16L3 11Z" fill="#232629" stroke="none" />
          <path d="M11 5C12 7 12 9 11 11M12.500 1.500C16 5 16 11 12.500 14.500" stroke="#b0b1b3" />
        </TrayIcon>
        <TrayIcon label="Bluetooth">
          <path d="M4 4.500L12 11.500L8 15V1L12 4.500L4 11.500" />
        </TrayIcon>
        <button className="flex w-8 items-center justify-center text-[16px]">de</button>
        <TrayIcon label="Displays">
          <path d="M4 1.500H15.500V12H8M.5 1H3V5H.5ZM1.500 5V12H4M4.500 4V12" />
          <path d="M6 12H12V15H6Z" fill="#232629" stroke="none" />
        </TrayIcon>
        <button aria-label="Show hidden icons" className="flex w-7 items-center justify-center">
          <svg viewBox="0 0 12 8" className="h-2 w-3" fill="#232629">
            <path d="M0 7L6 1L12 7Z" />
          </svg>
        </button>
        <div className="flex w-[138px] flex-col items-center justify-center text-center">
          <time className="text-[29px] leading-[29px]">10:54 PM</time>
          <span className="text-[23px] leading-[23px]">12/23/23</span>
        </div>
        <button aria-label="Show desktop" className="ml-[11px] flex items-center">
          <span className="flex h-9 w-9 flex-col justify-end border-2 border-[#232629] p-0.5">
            <span className="h-0.5 bg-[#232629]" />
          </span>
        </button>
      </div>
    </footer>
  );
}

/* ------------------------------------------------------------------ */
/* Window                                                              */
/* ------------------------------------------------------------------ */

const MENUS: [string, string, string][] = [
  ['', 'F', 'ile'],
  ['', 'E', 'dit'],
  ['', 'V', 'iew'],
  ['P', 'r', 'ocessing'],
  ['', 'T', 'ools'],
  ['', 'W', 'indow'],
  ['', 'H', 'elp'],
];

function TitleBar() {
  return (
    <header className="flex h-[31px] shrink-0 items-center bg-gradient-to-b from-[#566068] to-[#454d54] text-[15px] text-[#fcfcfc]">
      <div className="flex w-24 items-center pl-1">
        <svg viewBox="0 0 20 20" className="size-5">
          <path d="M0 11L10 3L20 11L10 19Z" fill="#0b8fe8" stroke="#0a58a8" strokeWidth=".8" />
          <path d="M5 9H13V13H5ZM13 11H17" fill="#fff" stroke="#fff" />
          <path d="M11 9L18 1" stroke="#f58220" strokeWidth="2" />
        </svg>
      </div>
      <div className="min-w-0 flex-1 truncate text-center">
        Pin Planner - /home/sven/intelFPGA_lite/23.1std/AndGate - AndGate
      </div>
      <div className="flex w-24 items-center justify-end gap-1.5 pr-[5px]">
        <button aria-label="Minimize">
          <svg viewBox="0 0 18 18" className="size-[18px]" fill="none" stroke="#fff" strokeWidth="1.200">
            <path d="M4 7L9 12L14 7" />
          </svg>
        </button>
        <button aria-label="Maximize">
          <svg viewBox="0 0 18 18" className="size-[18px]" fill="none" stroke="#fff" strokeWidth="1.200">
            <path d="M9 4L14 9L9 14L4 9Z" />
          </svg>
        </button>
        <button aria-label="Close">
          <svg viewBox="0 0 18 18" className="size-[18px]" fill="none" stroke="#4a5259" strokeWidth="1.300">
            <circle cx="9" cy="9" r="9" fill="#fff" stroke="none" />
            <path d="M5 5L13 13M13 5L5 13" />
          </svg>
        </button>
      </div>
    </header>
  );
}

function MenuBar() {
  return (
    <div className="flex h-9 shrink-0 items-start justify-between text-[15px]">
      <nav aria-label="Menu" className="flex gap-[5px] pl-1.5">
        {MENUS.map(([a, b, c]) => (
          <button key={a + b + c} className="h-[25px] border-b border-[#d0d1d3] px-1">
            {a}
            <u className="underline-offset-2">{b}</u>
            {c}
          </button>
        ))}
      </nav>
      <div className="flex items-center gap-[5px] pr-2 pt-1">
        <input
          aria-label="Search Intel FPGA"
          placeholder="Search Intel FPGA"
          className="h-7 w-[150px] rounded-xs border border-[#3daee9] bg-[#fcfcfc] pb-px pl-0.5 outline-none placeholder:text-[#a0a1a3]"
        />
        <button aria-label="Search the web">
          <svg viewBox="0 0 16 16" className="size-4">
            <circle cx="8" cy="8" r="8" fill="#0ba7f7" />
            <path d="M3 2C6 0 9 2 8 4L6 5L7 7C10 7 12 8 11 10L9 15C7 14 8 11 6 9L2 6Z" fill="#66dd11" />
            <path d="M11 1L14 4L12 5Z" fill="#66dd11" />
          </svg>
        </button>
      </div>
    </div>
  );
}

export default function App() {
  return (
    <div className="flex h-screen min-h-[1000px] flex-col overflow-hidden bg-[#eeeff1] font-['Noto_Sans',sans-serif] text-[14px] leading-5 text-[#232629]">
      <TitleBar />
      <MenuBar />
      <div className="flex min-h-0 flex-1">
        <ToolBar />
        <div className="flex min-w-0 flex-1 flex-col">
          <div className="flex min-h-0 flex-1">
            <LeftDocks />
            <div className="flex w-1.5 shrink-0 items-center justify-center">
              <GripV />
            </div>
            <PackageView />
            <div className="flex w-1.5 shrink-0 items-center justify-center">
              <GripV />
            </div>
            <PinLegend />
          </div>
          <div className="flex h-1.5 shrink-0 items-center justify-center">
            <GripH />
          </div>
          <AllPins />
        </div>
      </div>
      <div className="flex h-[25px] shrink-0 items-center justify-end gap-7 pr-0.5 text-[15px]">
        <span>0%</span>
        <span>00:00:00</span>
      </div>
      <Taskbar />
    </div>
  );
}
